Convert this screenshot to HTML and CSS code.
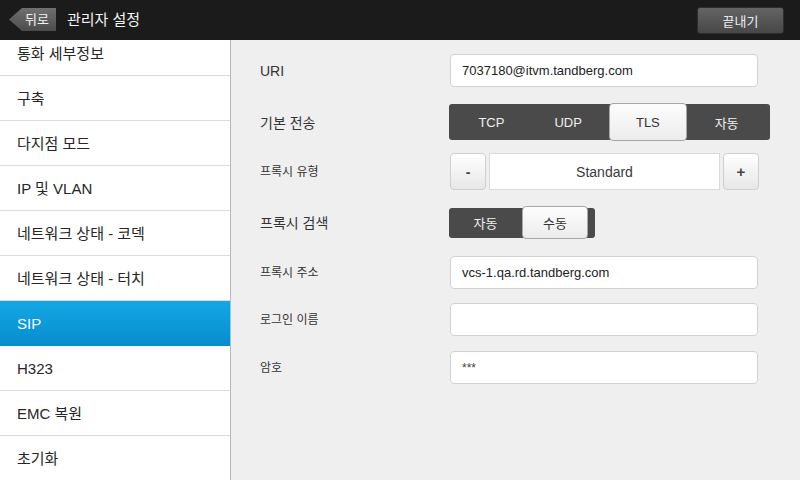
FILE: index.html
```html
<!DOCTYPE html>
<html lang="ko">
<head>
<meta charset="utf-8">
<title>관리자 설정</title>
<link rel="stylesheet" href="styles.css">
</head>
<body>
<div class="app">
  <header class="topbar">
    <span class="back">뒤로</span>
    <span class="title">관리자 설정</span>
    <span class="done">끝내기</span>
  </header>
  <div class="body">
    <nav class="sidebar">
      <ul class="nav">
        <li class="nav-item">통화 세부정보</li>
        <li class="nav-item">구축</li>
        <li class="nav-item">다지점 모드</li>
        <li class="nav-item">IP 및 VLAN</li>
        <li class="nav-item">네트워크 상태 - 코덱</li>
        <li class="nav-item">네트워크 상태 - 터치</li>
        <li class="nav-item active">SIP</li>
        <li class="nav-item">H323</li>
        <li class="nav-item">EMC 복원</li>
        <li class="nav-item">초기화</li>
      </ul>
    </nav>
    <main class="form">
      <div class="row row-uri">
        <span class="label big">URI</span>
        <span class="input">7037180@itvm.tandberg.com</span>
      </div>
      <div class="row row-seg">
        <span class="label big">기본 전송</span>
        <div class="seg">
          <span class="seg-item">TCP</span>
          <span class="seg-item">UDP</span>
          <span class="seg-item selected">TLS</span>
          <span class="seg-item">자동</span>
        </div>
      </div>
      <div class="row row-step">
        <span class="label">프록시 유형</span>
        <div class="stepper">
          <span class="step-btn minus">-</span>
          <span class="step-value">Standard</span>
          <span class="step-btn">+</span>
        </div>
      </div>
      <div class="row row-toggle">
        <span class="label big">프록시 검색</span>
        <div class="toggle">
          <span class="tog-item">자동</span>
          <span class="tog-item selected">수동</span>
        </div>
      </div>
      <div class="row row-addr">
        <span class="label">프록시 주소</span>
        <span class="input">vcs-1.qa.rd.tandberg.com</span>
      </div>
      <div class="row row-login">
        <span class="label">로그인 이름</span>
        <span class="input"></span>
      </div>
      <div class="row row-pass">
        <span class="label">암호</span>
        <span class="input pass">***</span>
      </div>
    </main>
  </div>
</div>
</body>
</html>
```
FILE: styles.css
```css
* { box-sizing: border-box; }
html, body { margin: 0; padding: 0; }
body {
  font-family: "Liberation Sans", "Noto Sans CJK KR", sans-serif;
  background: #efefef;
  color: #2a2a2a;
}
.app {
  width: 800px;
  height: 480px;
  display: flex;
  flex-direction: column;
  overflow: hidden;
}
.topbar {
  height: 40px;
  flex-shrink: 0;
  background: #1b1b1b;
  display: flex;
  align-items: center;
  padding: 0 16px 0 9px;
}
.back {
  width: 47px;
  height: 23px;
  margin-top: -1px;
  background: linear-gradient(#707070, #4c4c4c);
  clip-path: polygon(13px 0, 100% 0, 100% 100%, 13px 100%, 0 50%);
  color: #f2f2f2;
  font-size: 13px;
  line-height: 23px;
  padding-left: 16px;
}
.title {
  margin-left: 11px;
  color: #f4f4f4;
  font-size: 15px;
  line-height: 20px;
}
.done {
  margin-left: auto;
  width: 87px;
  height: 27px;
  border: 1px solid #2e2e2e;
  border-radius: 3px;
  background: linear-gradient(#646464, #474747);
  color: #eeeeee;
  font-size: 13px;
  display: flex;
  align-items: center;
  justify-content: center;
  margin-top: 1px;
}
.body {
  flex: 1;
  display: flex;
  min-height: 0;
}
.sidebar {
  width: 231px;
  flex-shrink: 0;
  background: #ffffff;
  border-right: 1px solid #b9b9b9;
  overflow: hidden;
}
.nav {
  list-style: none;
  margin: -9px 0 0 0;
  padding: 0;
}
.nav-item {
  height: 45px;
  border-bottom: 1px solid #dcdcdc;
  padding: 1px 0 0 17px;
  display: flex;
  align-items: center;
  font-size: 15px;
  line-height: 20px;
  color: #262626;
}
.nav-item.active {
  background: linear-gradient(#12a8e3, #0a8ccf);
  border-bottom-color: #0a8ccf;
  color: #ffffff;
}
.form {
  flex: 1;
  padding: 14px 0 0 29px;
  display: flex;
  flex-direction: column;
}
.row {
  display: flex;
  align-items: center;
}
.label {
  width: 190px;
  flex-shrink: 0;
  font-size: 12px;
  line-height: 18px;
  padding-top: 1px;
  color: #333333;
}
.label.big { font-size: 14px; }
.input {
  width: 308px;
  height: 33px;
  background: #ffffff;
  border: 1px solid #d2d2d2;
  border-radius: 4px;
  padding: 1px 0 0 11px;
  font-size: 13px;
  line-height: 30px;
  color: #222222;
}
.input.pass { font-size: 12px; color: #444; }
.row-uri { height: 33px; }
.row-seg { height: 38px; margin-top: 16px; }
.row-step { height: 37px; margin-top: 12px; }
.row-toggle { height: 33px; margin-top: 16px; }
.row-addr { height: 33px; margin-top: 17px; }
.row-login { height: 33px; margin-top: 14px; }
.row-pass { height: 33px; margin-top: 15px; }

.seg {
  margin-left: -1px;
  width: 321px;
  height: 36px;
  background: #4a4a4a;
  border-radius: 3px;
  display: flex;
  align-items: center;
  padding: 0 5px 0 4px;
}
.seg-item {
  flex: 1;
  height: 36px;
  display: flex;
  align-items: center;
  justify-content: center;
  color: #f0f0f0;
  font-size: 13px;
}
.seg-item.selected {
  height: 38px;
  margin: 0 1px 0 2px;
  background: linear-gradient(#fdfdfd, #ececec);
  border: 1px solid #a8a8a8;
  border-radius: 4px;
  color: #333333;
}
.stepper {
  display: flex;
  align-items: center;
  height: 37px;
}
.step-btn {
  width: 36px;
  height: 37px;
  border: 1px solid #cfcfcf;
  border-radius: 4px;
  background: linear-gradient(#ffffff, #e7e7e7);
  display: flex;
  align-items: center;
  justify-content: center;
  font-size: 15px;
  font-weight: bold;
  color: #444444;
}
.step-btn.minus { font-size: 14px; }
.step-value {
  width: 231px;
  height: 37px;
  margin: 0 3px;
  background: #ffffff;
  border: 1px solid #dadada;
  display: flex;
  align-items: center;
  justify-content: center;
  font-size: 14px;
  color: #3a3a3a;
}
.toggle {
  margin-left: -1px;
  width: 146px;
  height: 30px;
  background: #4a4a4a;
  border-radius: 3px;
  display: flex;
  align-items: center;
  padding-right: 7px;
}
.tog-item {
  width: 73px;
  height: 30px;
  display: flex;
  align-items: center;
  justify-content: center;
  color: #f0f0f0;
  font-size: 13px;
}
.tog-item.selected {
  width: 66px;
  height: 33px;
  margin-top: -1px;
  background: linear-gradient(#fdfdfd, #ececec);
  border: 1px solid #a8a8a8;
  border-radius: 4px;
  color: #333333;
}
```
